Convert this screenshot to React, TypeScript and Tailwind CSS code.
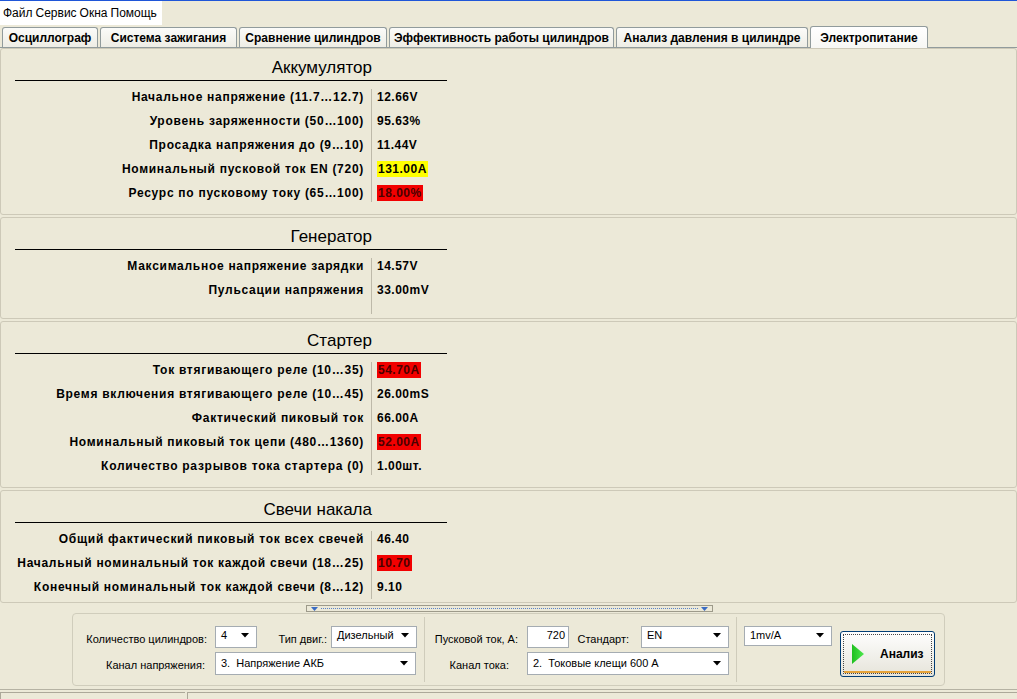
import React from "react";

type Row = { label: string; value: string; hl?: "yellow" | "red" };
type Sec = { title: string; rows: Row[]; h: string; sep: string };

const sections: Sec[] = [
  {
    title: "Аккумулятор",
    h: "h-[167px]",
    sep: "h-[113px]",
    rows: [
      { label: "Начальное напряжение (11.7…12.7)", value: "12.66V" },
      { label: "Уровень заряженности (50…100)", value: "95.63%" },
      { label: "Просадка напряжения до (9…10)", value: "11.44V" },
      { label: "Номинальный пусковой ток EN (720)", value: "131.00A", hl: "yellow" },
      { label: "Ресурс по пусковому току (65…100)", value: "18.00%", hl: "red" },
    ],
  },
  {
    title: "Генератор",
    h: "h-[102px]",
    sep: "h-[56px]",
    rows: [
      { label: "Максимальное напряжение зарядки", value: "14.57V" },
      { label: "Пульсации напряжения", value: "33.00mV" },
    ],
  },
  {
    title: "Стартер",
    h: "h-[167px]",
    sep: "h-[113px]",
    rows: [
      { label: "Ток втягивающего реле (10…35)", value: "54.70A", hl: "red" },
      { label: "Время включения втягивающего реле (10…45)", value: "26.00mS" },
      { label: "Фактический пиковый ток", value: "66.00A" },
      { label: "Номинальный пиковый ток цепи (480…1360)", value: "52.00A", hl: "red" },
      { label: "Количество разрывов тока стартера (0)", value: "1.00шт." },
    ],
  },
  {
    title: "Свечи накала",
    h: "h-[113px]",
    sep: "h-[68px]",
    rows: [
      { label: "Общий фактический пиковый ток всех свечей", value: "46.40" },
      { label: "Начальный номинальный ток каждой свечи (18…25)", value: "10.70", hl: "red" },
      { label: "Конечный номинальный ток каждой свечи (8…12)", value: "9.10" },
    ],
  },
];

const tabs: { t: string; w: string; sel?: boolean }[] = [
  { t: "Осциллограф", w: "w-[96px]" },
  { t: "Система зажигания", w: "w-[137px]" },
  { t: "Сравнение цилиндров", w: "w-[148px]" },
  { t: "Эффективность работы цилиндров", w: "w-[225px]" },
  { t: "Анализ давления в цилиндре", w: "w-[192px]" },
  { t: "Электропитание", w: "w-[118px]", sel: true },
];

function Arrow() {
  return (
    <svg width="8" height="5" viewBox="0 0 8 5" className="shrink-0">
      <polygon points="0,0 8,0 4,4.5" fill="#000" />
    </svg>
  );
}

function Combo({ text, cls, top }: { text: string; cls: string; top?: boolean }) {
  return (
    <div
      className={
        "bg-white border border-[#a5acb2] flex justify-between pl-[5px] pr-[7px] text-[11px] text-black " +
        cls +
        (top ? " items-start pt-[1px]" : " items-center")
      }
    >
      <span className="whitespace-pre leading-[15px]">{text}</span>
      <span className={top ? "mt-[5px]" : ""}>
        <Arrow />
      </span>
    </div>
  );
}

function Section({ s }: { s: Sec }) {
  return (
    <div className={"border border-[#cdc9b8] rounded-[3px] pt-[6px] " + s.h}>
      <div className="ml-[14px] w-[432px] h-[26px] border-b border-black flex items-center justify-end pr-[75px]">
        <span className="text-[17px] text-black leading-none">{s.title}</span>
      </div>
      <div className="flex ml-[14px] pt-[4px]">
        <div className="w-[349px] flex flex-col">
          {s.rows.map((r, i) => (
            <div
              key={i}
              className="h-[24px] flex items-center justify-end text-[12px] font-bold text-black whitespace-nowrap tracking-[0.72px]"
            >
              {r.label}
            </div>
          ))}
        </div>
        <div className={"ml-[7px] mt-[4px] w-px bg-[#bdb9a9] " + s.sep} />
        <div className="ml-[5px] flex flex-col">
          {s.rows.map((r, i) => (
            <div key={i} className="h-[24px] flex items-center text-[12px] font-bold tracking-[0.5px]">
              {r.hl === "yellow" ? (
                <span className="bg-[#ffff00] text-black px-[1px] h-[16px] leading-[16px]">{r.value}</span>
              ) : r.hl === "red" ? (
                <span className="bg-[#f20000] text-[#4a0000] px-[1px] h-[16px] leading-[16px]">{r.value}</span>
              ) : (
                <span className="text-black">{r.value}</span>
              )}
            </div>
          ))}
        </div>
      </div>
    </div>
  );
}

export default function App() {
  return (
    <div className="w-[1017px] h-[699px] overflow-hidden bg-[#ece9d8] flex flex-col font-['Liberation_Sans',Arial,sans-serif] select-none">
      <div className="h-[1px] bg-[#1f56d8] shrink-0" />
      <div className="h-[24px] flex shrink-0">
        <div className="w-[162px] bg-white flex items-center pl-[3px] text-[12px] text-black gap-[3px]">
          <span>Файл</span>
          <span>Сервис</span>
          <span>Окна</span>
          <span>Помощь</span>
        </div>
      </div>
      <div className="h-[22px] flex items-end pl-[2px] gap-[2px] shrink-0">
        {tabs.map((t, i) =>
          t.sel ? (
            <div
              key={i}
              className={
                "h-[22px] border border-b-0 border-[#919b9c] rounded-t-[3px] bg-gradient-to-b from-white to-[#f7f7f4] flex items-start justify-center pt-[2px] text-[12px] font-bold text-black relative top-[1px] " +
                t.w
              }
            >
              {t.t}
            </div>
          ) : (
            <div
              key={i}
              className={
                "h-[20px] border border-b-0 border-[#919b9c] rounded-t-[3px] bg-gradient-to-b from-[#fbfbf9] to-[#eeede5] flex items-center justify-center text-[12px] font-bold text-black " +
                t.w
              }
            >
              {t.t}
            </div>
          )
        )}
      </div>
      <div className="h-px bg-[#919b9c] shrink-0" />
      <div className="flex flex-col gap-[2px] shrink-0">
        {sections.map((s, i) => (
          <Section key={i} s={s} />
        ))}
      </div>
      <div className="ml-[306px] mt-[2px] w-[407px] h-[7px] border border-[#9d9a8a] flex items-center px-[4px] gap-[3px] shrink-0">
        <svg width="7" height="4" viewBox="0 0 7 4">
          <polygon points="0,0 7,0 3.5,4" fill="#3a6cc4" />
        </svg>
        <div className="flex-1 border-t border-dotted border-[#5a83c8]" />
        <svg width="7" height="4" viewBox="0 0 7 4">
          <polygon points="0,0 7,0 3.5,4" fill="#3a6cc4" />
        </svg>
      </div>
      <div className="ml-[72px] mt-[1px] w-[873px] h-[73px] border border-[#d0cdbc] rounded-[4px] flex shrink-0 text-[11px] text-black">
        <div className="w-[351px] flex flex-col pt-[12px] gap-[4px]">
          <div className="flex h-[22px]">
            <div className="w-[134px] text-right pt-[6px] leading-[15px]">Количество цилиндров:</div>
            <Combo text="4" cls="ml-[8px] w-[42px] h-[22px]" top />
            <div className="w-[70px] text-right pt-[6px] leading-[15px]">Тип двиг.:</div>
            <Combo text="Дизельный" cls="ml-[4px] w-[86px] h-[22px]" top />
          </div>
          <div className="flex h-[23px]">
            <div className="w-[134px] text-right pt-[6px] leading-[15px] pr-[2px]">Канал напряжения:</div>
            <Combo text="3.  Напряжение АКБ" cls="ml-[8px] w-[201px] h-[23px]" />
          </div>
        </div>
        <div className="w-px bg-[#cfccbb] my-[3px]" />
        <div className="w-[311px] flex flex-col pt-[12px] gap-[4px]">
          <div className="flex h-[22px]">
            <div className="w-[94px] text-right pt-[6px] leading-[15px] pr-[1px]">Пусковой ток, А:</div>
            <div className="ml-[8px] w-[42px] h-[22px] bg-white border border-[#a5acb2] text-right pr-[3px] pt-[1px] leading-[15px]">
              720
            </div>
            <div className="w-[60px] text-right pt-[6px] leading-[15px]">Стандарт:</div>
            <Combo text="EN" cls="ml-[12px] w-[88px] h-[22px]" top />
          </div>
          <div className="flex h-[23px]">
            <div className="w-[94px] text-right pt-[6px] leading-[15px] pr-[10px]">Канал тока:</div>
            <Combo text="2.  Токовые клещи 600 А" cls="ml-[8px] w-[202px] h-[23px]" />
          </div>
        </div>
        <div className="w-px bg-[#cfccbb] my-[3px]" />
        <div className="flex pl-[7px] pt-[12px]">
          <Combo text="1mv/A" cls="w-[88px] h-[20px]" top />
          <div className="ml-[8px] mt-[5px] w-[95px] h-[46px] border border-[#003c74] rounded-[3px] bg-gradient-to-b from-[#fefefe] to-[#e6e4da] p-[2px]">
            <div className="w-full h-full border border-dotted border-[#444] shadow-[inset_0_-2px_0_#e5a33a] flex items-center pl-[8px]">
              <svg width="12" height="20" viewBox="0 0 12 20">
                <defs>
                  <linearGradient id="gr" x1="0" y1="0" x2="1" y2="0">
                    <stop offset="0" stopColor="#1fbf1f" />
                    <stop offset="1" stopColor="#4ee84e" />
                  </linearGradient>
                </defs>
                <polygon points="0,0 12,10 0,20" fill="url(#gr)" />
              </svg>
              <span className="ml-[16px] font-bold text-[12px]">Анализ</span>
            </div>
          </div>
        </div>
      </div>
      <div className="mt-[3px] h-px bg-[#b5b2a3] shrink-0" />
      <div className="mt-[2px] flex-1 flex gap-[2px]">
        <div className="w-[185px] border-t border-l border-[#aca899]" />
        <div className="flex-1 border-t border-l border-[#aca899]" />
      </div>
    </div>
  );
}
